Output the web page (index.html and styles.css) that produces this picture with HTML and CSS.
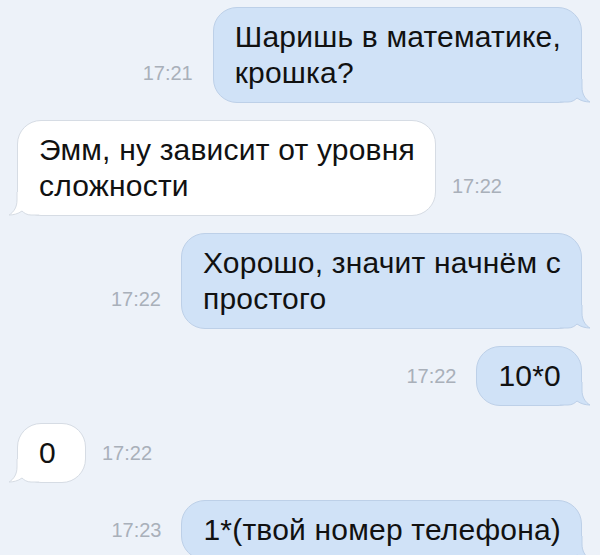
FILE: index.html
```html
<!DOCTYPE html>
<html lang="ru">
<head>
    <meta charset="UTF-8">
    <meta name="viewport" content="width=device-width, initial-scale=1.0">
    <title>Диалог</title>
    <link rel="stylesheet" href="styles.css">
</head>
<body>
    <div class="chat">
        <!-- исходящее -->
        <div class="row out">
            <span class="time">17:21</span>
            <div class="bubble">Шаришь в математике,<br>крошка?
                <svg class="tail" width="30" height="24" viewBox="0 0 30 24"><path class="fill" d="M0 0 L22 0 L22 8 C22 15 25 20 30 23 C26 23 21 22 17 19 C15 21 12 23 8 23 L0 23 Z"/><path class="line" d="M22 0 L22 8 C22 15 25 20 30 23 C26 23 21 22 17 19 C15 21 12 23 8 23 L0 23"/></svg>
            </div>
        </div>
        <!-- входящее -->
        <div class="row in">
            <div class="bubble">Эмм, ну зависит от уровня<br>сложности
                <svg class="tail" width="30" height="24" viewBox="0 0 30 24"><path class="fill" d="M30 0 L8 0 L8 8 C8 15 5 20 0 23 C4 23 9 22 13 19 C15 21 18 23 22 23 L30 23 Z"/><path class="line" d="M8 0 L8 8 C8 15 5 20 0 23 C4 23 9 22 13 19 C15 21 18 23 22 23 L30 23"/></svg>
            </div>
            <span class="time">17:22</span>
        </div>
        <div class="row out">
            <span class="time">17:22</span>
            <div class="bubble">Хорошо, значит начнём с<br>простого
                <svg class="tail" width="30" height="24" viewBox="0 0 30 24"><path class="fill" d="M0 0 L22 0 L22 8 C22 15 25 20 30 23 C26 23 21 22 17 19 C15 21 12 23 8 23 L0 23 Z"/><path class="line" d="M22 0 L22 8 C22 15 25 20 30 23 C26 23 21 22 17 19 C15 21 12 23 8 23 L0 23"/></svg>
            </div>
        </div>
        <div class="row out">
            <span class="time">17:22</span>
            <div class="bubble">10*0
                <svg class="tail" width="30" height="24" viewBox="0 0 30 24"><path class="fill" d="M0 0 L22 0 L22 8 C22 15 25 20 30 23 C26 23 21 22 17 19 C15 21 12 23 8 23 L0 23 Z"/><path class="line" d="M22 0 L22 8 C22 15 25 20 30 23 C26 23 21 22 17 19 C15 21 12 23 8 23 L0 23"/></svg>
            </div>
        </div>
        <div class="row in">
            <div class="bubble short">0
                <svg class="tail" width="30" height="24" viewBox="0 0 30 24"><path class="fill" d="M30 0 L8 0 L8 8 C8 15 5 20 0 23 C4 23 9 22 13 19 C15 21 18 23 22 23 L30 23 Z"/><path class="line" d="M8 0 L8 8 C8 15 5 20 0 23 C4 23 9 22 13 19 C15 21 18 23 22 23 L30 23"/></svg>
            </div>
            <span class="time">17:22</span>
        </div>
        <div class="row out">
            <span class="time">17:23</span>
            <div class="bubble">1*(твой номер телефона)
                <svg class="tail" width="30" height="24" viewBox="0 0 30 24"><path class="fill" d="M0 0 L22 0 L22 8 C22 15 25 20 30 23 C26 23 21 22 17 19 C15 21 12 23 8 23 L0 23 Z"/><path class="line" d="M22 0 L22 8 C22 15 25 20 30 23 C26 23 21 22 17 19 C15 21 12 23 8 23 L0 23"/></svg>
            </div>
        </div>
    </div>
</body>
</html>
```

FILE: styles.css
```css
/* Фон и общий шрифт */
body {
    margin: 0;
    background: #edf2f9;
    font-family: "Liberation Sans", Arial, sans-serif;
    color: #111;
}
/* Лента сообщений */
.chat {
    display: flex;
    flex-direction: column;
    gap: 17px;
    padding: 7px 18px 0 17px;
}
.row {
    display: flex;
    align-items: flex-end;
}
.row.out {
    justify-content: flex-end;
}
/* Пузырь */
.bubble {
    position: relative;
    font-size: 30px;
    letter-spacing: 0.2px;
    line-height: 36px;
    padding: 11px 20px 11px 21px;
    border-radius: 24px;
    white-space: nowrap;
}
.out .bubble {
    background: #d0e2f7;
    border: 1px solid #bdd0e8;
}
.in .bubble {
    background: #fff;
    border: 1px solid #d6dce4;
}
.bubble.short {
    min-width: 26px;
}
/* Хвостик */
.tail {
    position: absolute;
    bottom: -1px;
}
.out .tail {
    right: -9px;
}
.in .tail {
    left: -9px;
}
.tail .line {
    fill: none;
    stroke-width: 1;
}
.out .tail .fill { fill: #d0e2f7; }
.out .tail .line { stroke: #bdd0e8; }
.in .tail .fill { fill: #fff; }
.in .tail .line { stroke: #d6dce4; }
/* Время */
.time {
    font-size: 20px;
    line-height: 36px;
    color: #a9b0ba;
    margin-bottom: 12px;
}
.out .time {
    margin-right: 20px;
}
.in .time {
    margin-left: 16px;
}
```
